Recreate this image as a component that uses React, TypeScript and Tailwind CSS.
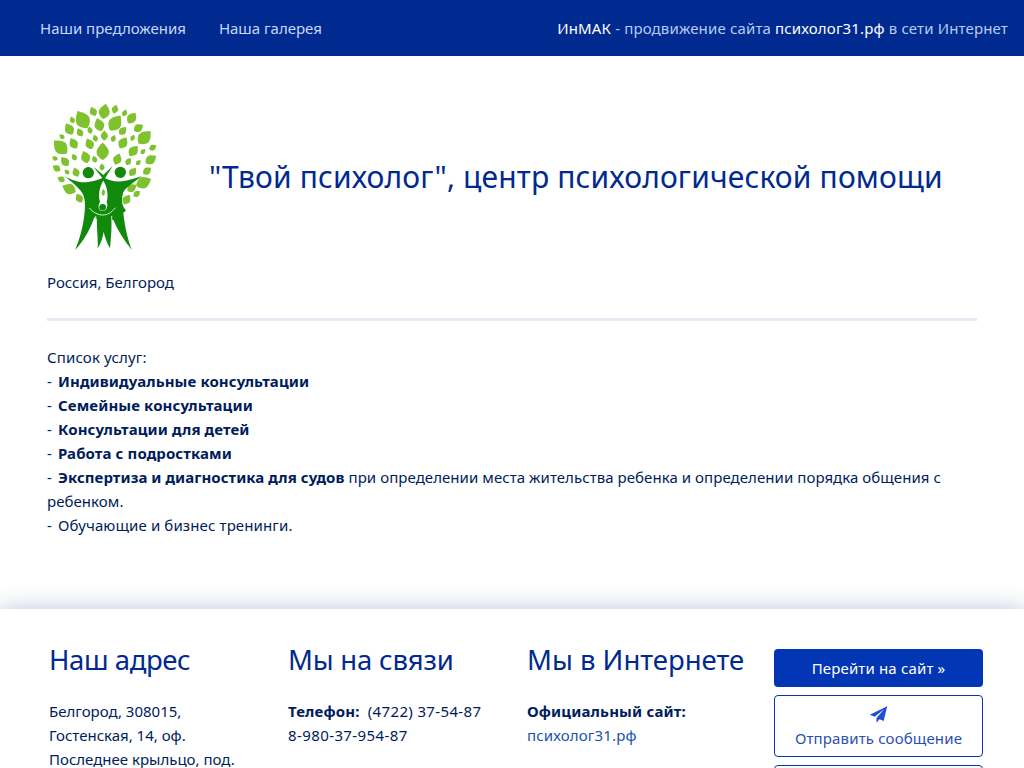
import React from "react";

const leaves: [number, number, number, number][] = [
  [128,75,22,-30],[193,50,17,10],[225,43,10,15],[160,50,11,-25],[254,54,8,20],[275,70,14,35],[97,75,8,-20],
  [88,103,14,-30],[120,113,10,-30],[178,90,15,-20],[225,85,20,35],[150,106,8,-10],[248,108,11,40],[295,99,12,55],
  [66,125,7,-50],[166,130,8,-20],[193,122,11,0],[220,131,8,20],[249,144,14,30],[278,129,7,30],[313,128,19,45],
  [62,157,20,-45],[101,146,13,-30],[149,147,13,-25],[188,170,19,0],[280,168,14,40],[309,170,7,40],[338,158,9,60],
  [45,190,7,-60],[75,200,12,-40],[103,187,8,-30],[137,187,14,-20],[164,193,8,-20],[232,193,13,20],[265,200,9,30],[295,203,7,40],[332,194,14,55],
  [50,220,10,-55],[81,231,7,-40],[108,232,11,-20],[186,217,8,0],[278,231,11,35],[321,228,11,50],
  [64,253,9,-60],[310,263,18,65],[88,282,16,-65],[275,279,12,55],[290,297,9,50],[118,310,11,-30],[260,314,12,30],
];

function Leaf({ x, y, s, a }: { x: number; y: number; s: number; a: number }) {
  return (
    <path
      transform={`translate(${x} ${y}) rotate(${a}) scale(${(s / 10) * 1.3})`}
      d="M0 -11 C4 -7 9 -2 7 3 C5 7 2 9 0 10 C-2 9 -5 7 -7 3 C-9 -2 -4 -7 0 -11 Z"
      fill="#7fc230"
    />
  );
}

function Logo() {
  return (
    <svg viewBox="21 0 369 495" className="w-[123px] h-[165px] shrink-0" aria-hidden="true">
      {leaves.map(([x, y, s, a], i) => (
        <Leaf key={i} x={x} y={y} s={s} a={a} />
      ))}
      <g transform="translate(60 195)">
        <g fill="#118a0c">
          <circle cx="85" cy="38" r="17" />
          <circle cx="181" cy="37" r="17" />
          <path d="M12 48 C40 62 60 70 85 66 C100 64 115 60 127 54 L100 20 L130 45 L158 18 L135 55 C150 62 165 66 185 64 C205 62 225 55 245 48 C225 65 205 78 194 90 C186 100 185 120 188 135 C192 145 197 150 198 152 L190 158 C194 200 205 245 216 270 C195 245 175 215 160 180 L156 180 C155 200 153 240 150 265 C142 250 135 235 131 215 C128 235 122 250 113 265 C112 240 111 200 110 178 L103 172 C90 210 70 245 45 270 C58 240 70 200 74 155 C77 125 74 105 60 90 C50 78 32 62 12 48 Z" />
        </g>
        <path d="M130 62 C142 80 146 108 140 125 C145 138 140 153 128 153 C116 153 112 138 120 125 C114 108 118 80 130 62 Z" fill="#fff" />
        <path d="M130 86 C137 94 137 102 130 108 C123 102 123 94 130 86 Z" fill="#7fc230" />
        <path d="M88 144 C100 158 115 165 128 165 C142 165 155 158 166 143 M107 168 C110 200 111 235 112 258 M155 168 C156 200 158 230 164 255" fill="none" stroke="#fff" strokeWidth="2.5" />
        <circle cx="128" cy="142" r="10" fill="#118a0c" />
      </g>
    </svg>
  );
}

export default function App() {
  return (
    <div className="h-[768px] overflow-hidden bg-white text-[15px] leading-6 tracking-[0.15px] text-[#001c5c] font-['Noto_Sans','Open_Sans',sans-serif]">
      <nav className="h-14 bg-[#002a8f] flex items-center justify-between pl-10 pr-4">
        <div className="flex gap-[33px] text-[#c8d8f8] tracking-normal">
          <a>Наши предложения</a>
          <a>Наша галерея</a>
        </div>
        <div className="text-[#b8cbf5]">
          <span className="text-white">ИнМАК</span> - продвижение сайта <span className="text-white">психолог31.рф</span> в сети Интернет
        </div>
      </nav>

      <main className="w-[960px] mx-auto px-[15px] h-[553px] pt-[39px]">
        <div className="flex items-center">
          <Logo />
          <h1 className="ml-[39px] mb-[2px] text-[30px] leading-9 text-[#002a8f]">"Твой психолог", центр психологической помощи</h1>
        </div>
        <p className="mt-[10px] tracking-normal">Россия, Белгород</p>
        <hr className="mt-6 border-0 h-[3px] bg-[#e6ecf5]" />
        <div className="mt-6">
          <div>Список услуг:</div>
          <div>- <b className="ml-[2px] tracking-[0.1px]">Индивидуальные консультации</b></div>
          <div>- <b className="ml-[2px] tracking-[0.1px]">Семейные консультации</b></div>
          <div>- <b className="ml-[2px] tracking-[0.1px]">Консультации для детей</b></div>
          <div>- <b className="ml-[2px] tracking-[0.1px]">Работа с подростками</b></div>
          <div>- <b className="ml-[2px] tracking-[0.05px]">Экспертиза и диагностика для судов</b> <span className="tracking-[0.06px]">при определении места жительства ребенка и определении порядка общения с ребенком.</span></div>
          <div>- <span className="ml-[2px] tracking-[0.12px]">Обучающие и бизнес тренинги.</span></div>
        </div>
      </main>

      <footer className="relative bg-white shadow-[0_0_22px_rgba(0,50,110,0.28)] pt-[30px] pl-[49px] flex">
        <div className="w-[239px]">
          <h2 className="text-[27.5px] leading-[42px] text-[#002a8f] tracking-[-0.4px]">Наш адрес</h2>
          <div className="mt-[18px] tracking-normal">
            <div>Белгород, 308015,</div>
            <div>Гостенская, 14, оф.</div>
            <div>Последнее крыльцо, под.</div>
          </div>
        </div>
        <div className="w-[239px]">
          <h2 className="text-[27.5px] leading-[42px] text-[#002a8f] tracking-[-0.2px]">Мы на связи</h2>
          <div className="mt-[18px]">
            <div><b>Телефон:</b>&nbsp; <span className="tracking-[0.35px]">(4722) 37-54-87</span></div>
            <div className="tracking-[0.4px]">8-980-37-954-87</div>
          </div>
        </div>
        <div className="w-[247px]">
          <h2 className="text-[27.5px] leading-[42px] text-[#002a8f] tracking-normal">Мы в Интернете</h2>
          <div className="mt-[18px]">
            <div><b>Официальный сайт:</b></div>
            <a className="text-[#1a4fb5]">психолог31.рф</a>
          </div>
        </div>
        <div className="w-[209px] flex flex-col gap-2 pt-[10px]">
          <a className="h-[38px] rounded bg-[#0336b4] text-white flex items-center justify-center">Перейти на сайт »</a>
          <a className="h-[62px] rounded border border-[#0336b4] text-[#2a4fb0] flex flex-col items-center justify-center pt-[2px]">
            <svg viewBox="0 0 24 24" className="w-[19px] h-[19px] mb-[3px] translate-y-[1px]" fill="#1d4fd8" aria-hidden="true">
              <path d="M23 1.5 1 12.2l6.2 2.6L19 5.5 9.5 16.5v6l3.8-4.6 5.2 2.2z" />
            </svg>
            <span>Отправить сообщение</span>
          </a>
          <a className="h-[62px] rounded border border-[#0336b4]" />
        </div>
      </footer>
    </div>
  );
}
